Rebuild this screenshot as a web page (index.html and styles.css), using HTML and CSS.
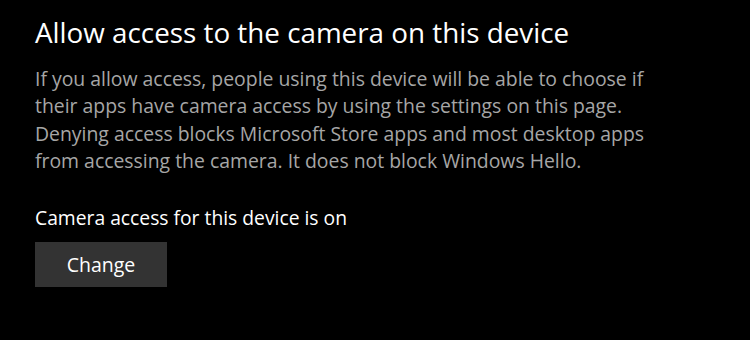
FILE: index.html
```html
<!DOCTYPE html>
<html>
<head>
<meta charset="utf-8">
<link rel="stylesheet" href="styles.css">
</head>
<body>
<main class="panel">
  <h1 class="title">Allow access to the camera on this device</h1>
  <p class="desc">If you allow access, people using this device will be able to choose if their apps have camera access by using the settings on this page. Denying access blocks Microsoft Store apps and most desktop apps from accessing the camera. It does not block Windows Hello.</p>
  <p class="status">Camera access for this device is on</p>
  <button class="btn">Change</button>
</main>
</body>
</html>
```
FILE: styles.css
```css
html, body {
  margin: 0;
  padding: 0;
  background: #000;
  width: 750px;
  height: 340px;
  overflow: hidden;
}
.panel {
  padding: 14px 0 0 35px;
  font-family: "Open Sans", "Noto Sans", sans-serif;
  color: #fff;
}
.title {
  margin: 0;
  font-size: 27.8px;
  font-weight: 400;
  line-height: 36px;
}
.desc {
  margin: 15px 0 0;
  width: 635px;
  font-size: 19.4px;
  line-height: 27.3px;
  color: #a6a6a6;
}
.status {
  margin: 31px 0 0;
  font-size: 19.3px;
  line-height: 26px;
}
.btn {
  display: block;
  margin-top: 11px;
  width: 132px;
  height: 45px;
  background: #333;
  border: 0;
  color: #fff;
  font-family: "Open Sans", "Noto Sans", sans-serif;
  font-size: 19.5px;
  padding: 0;
}
```
